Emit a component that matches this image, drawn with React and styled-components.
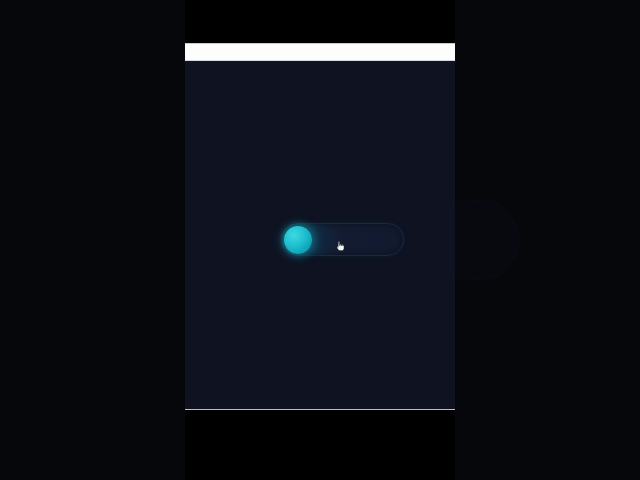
import React from "react";
import styled, { createGlobalStyle } from "styled-components";

const GlobalStyle = createGlobalStyle`
  html, body {
    margin: 0;
    padding: 0;
    background: #06070b;
    font-family: "Inter", "Liberation Sans", sans-serif;
  }
`;

const Stage = styled.div`
  display: flex;
  width: 640px;
  height: 480px;
  overflow: hidden;
  background: #06070b;
`;

const SidePanel = styled.div`
  position: relative;
  width: 185px;
  height: 100%;
  overflow: hidden;
  background: #06070b;
`;

// blurred echo of the switch in the side backdrop
const Ghost = styled.div`
  position: absolute;
  left: -24px;
  top: 200px;
  width: 86px;
  height: 78px;
  border-radius: 39px;
  background: #07090f;
  border: 1px solid #0c111c;
  filter: blur(1px);
`;

const Column = styled.div`
  display: flex;
  flex-direction: column;
  width: 270px;
  height: 100%;
`;

const TopGap = styled.div`
  height: 43px;
  background: #000;
`;

const AddressBar = styled.div`
  height: 18px;
  background: #fdfdfd;
  border-top: 1px solid #c8cacd;
  border-bottom: 1px solid #d6d9de;
  box-sizing: border-box;
`;

const Screen = styled.div`
  box-sizing: border-box;
  height: 349px;
  padding: 8px 0 0 44px;
  background: #0e1221;
  display: flex;
  align-items: center;
  justify-content: center;
  border-bottom: 1px solid #b8bcc6;
`;

const BottomGap = styled.div`
  flex: 1;
  background: #000;
`;

const Track = styled.button`
  position: relative;
  flex: none;
  width: 123px;
  height: 33px;
  padding: 0;
  border-radius: 17px;
  border: 1px solid #1a2a40;
  background: linear-gradient(90deg, #0e4052 0%, #0f3950 16%, #112c44 28%, #12223a 38%, #131b31 50%, #121a2e 100%);
  box-shadow: inset 0 0 6px rgba(0, 0, 0, 0.45), 0 0 5px rgba(20, 90, 120, 0.18);
  cursor: pointer;
`;

const Knob = styled.span`
  position: absolute;
  left: 2px;
  top: 2px;
  width: 28px;
  height: 28px;
  border-radius: 50%;
  background: radial-gradient(circle at 35% 32%, #40d8e4 0%, #1ec0d0 42%, #1099ae 80%, #0b7f94 100%);
  box-shadow: 0 0 10px 2px rgba(30, 200, 220, 0.45);
`;

const Pointer = styled.svg`
  position: absolute;
  left: 54px;
  top: 17px;
  width: 8px;
  height: 10px;
`;

export default function App() {
  return (
    <>
      <GlobalStyle />
      <Stage>
        <SidePanel />
        <Column>
          <TopGap />
          <AddressBar />
          <Screen>
            <Track aria-label="toggle">
              <Knob />
              <Pointer viewBox="0 0 8 10">
                <path
                  d="M2.5 0.5h1v4h0.6v-1.2h1v1.3h0.6v-1h1v1.2h0.6v-0.6h0.7v3.2l-1 2.1h-4l-2-2.6v-1.4h1v1z"
                  fill="#f4f4f4"
                  stroke="#222"
                  strokeWidth="0.4"
                />
              </Pointer>
            </Track>
          </Screen>
          <BottomGap />
        </Column>
        <SidePanel>
          <Ghost />
        </SidePanel>
      </Stage>
    </>
  );
}
